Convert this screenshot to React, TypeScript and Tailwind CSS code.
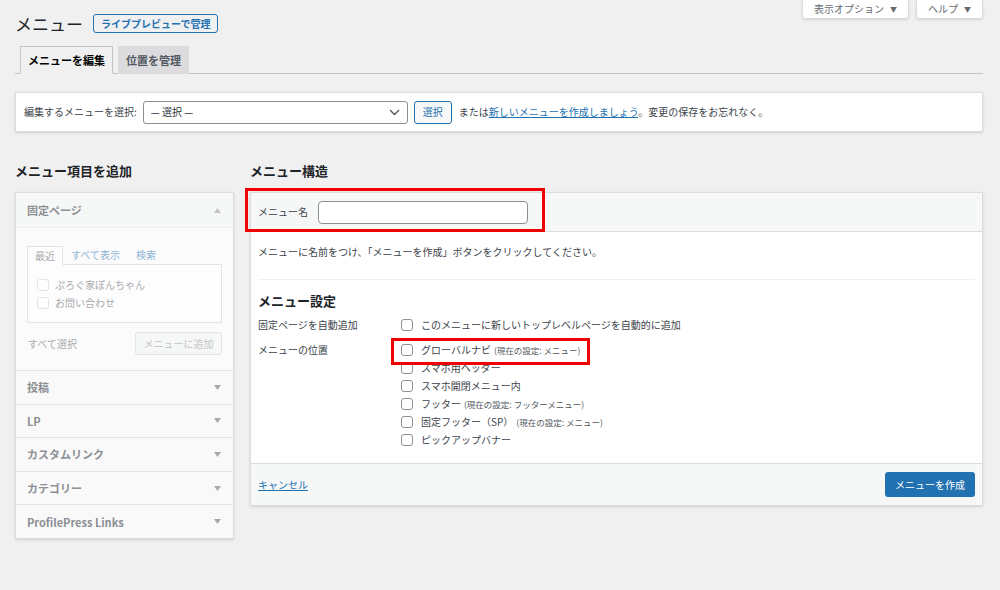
const Check = ({ faded = false }: { faded?: boolean }) => (
  <span
    className={
      "inline-block size-[12px] shrink-0 rounded-[3px] border bg-white " +
      (faded ? "border-[#e2e3e5]" : "border-[#8c8f94]")
    }
  />
);

const Tri = ({ up = false }: { up?: boolean }) => (
  <svg width="7" height="5" viewBox="0 0 7 5" className="shrink-0">
    {up ? <polygon points="0,5 7,5 3.5,0" fill="#c3c4c7" /> : <polygon points="0,0 7,0 3.5,5" fill="#a7aaad" />}
  </svg>
);

const sections = ["投稿", "LP", "カスタムリンク", "カテゴリー", "ProfilePress Links"];

const locations: { name: string; note?: string }[] = [
  { name: "グローバルナビ", note: "(現在の設定: メニュー)" },
  { name: "スマホ用ヘッダー" },
  { name: "スマホ開閉メニュー内" },
  { name: "フッター", note: "(現在の設定: フッターメニュー)" },
  { name: "固定フッター（SP）", note: "(現在の設定: メニュー)" },
  { name: "ピックアップバナー" },
];

export default function App() {
  return (
    <div className="min-h-[590px] bg-[#f0f0f1] font-['Noto_Sans_CJK_JP','Noto_Sans',sans-serif] text-[10px] leading-[14px] text-[#3c434a]">
      {/* title row + screen options */}
      <div className="flex items-start justify-between pl-[15px] pr-[17px]">
        <div className="flex items-center gap-[10px] pt-[14px]">
          <h1 className="text-[17px] leading-[19px] text-[#1d2327]">メニュー</h1>
          <span className="flex h-[19px] items-center rounded-[3px] border border-[#2271b1] px-[7px] text-[10px] font-semibold text-[#2271b1]">
            ライブプレビューで管理
          </span>
        </div>
        <div className="flex gap-[7px]">
          <span className="flex h-[19px] items-center gap-[6px] rounded-b-[3px] border border-t-0 border-[#dcdcde] bg-white px-[11px] text-[#646970] shadow-sm">
            表示オプション <span className="text-[7px]">▼</span>
          </span>
          <span className="flex h-[19px] items-center gap-[6px] rounded-b-[3px] border border-t-0 border-[#dcdcde] bg-white px-[11px] text-[#646970] shadow-sm">
            ヘルプ <span className="text-[7px]">▼</span>
          </span>
        </div>
      </div>

      {/* tabs */}
      <div className="mx-[15px] mr-[17px] mt-[13px] flex gap-[5px] border-b border-[#c3c4c7] pl-[5px]">
        <span className="-mb-px flex h-[28px] items-center border border-[#c3c4c7] border-b-[#f0f0f1] bg-[#f0f0f1] px-[7px] text-[11px] font-bold text-black">
          メニューを編集
        </span>
        <span className="-mb-px flex h-[28px] items-center border border-[#dcdcde] bg-[#dcdcde] px-[7px] text-[11px] font-semibold text-[#50575e]">
          位置を管理
        </span>
      </div>

      {/* select menu bar */}
      <div className="ml-[15px] mr-[17px] mt-[18px] flex h-[40px] items-center border border-[#dcdcde] bg-white px-[8px] shadow-sm">
        <span className="mr-[6px]">編集するメニューを選択:</span>
        <span className="flex h-[23px] w-[265px] items-center justify-between rounded-[3px] border border-[#8c8f94] bg-white pl-[7px] pr-[7px] text-[#2c3338]">
          — 選択 —
          <svg width="11" height="7" viewBox="0 0 11 7">
            <polyline points="1,1 5.5,5.5 10,1" fill="none" stroke="#50575e" strokeWidth="1.4" />
          </svg>
        </span>
        <span className="ml-[6px] flex h-[23px] items-center rounded-[3px] border border-[#2271b1] bg-[#f6f7f7] px-[8px] text-[#2271b1]">
          選択
        </span>
        <span className="ml-[7px]">
          または<span className="text-[#2271b1] underline">新しいメニューを作成しましょう</span>。変更の保存をお忘れなく。
        </span>
      </div>

      {/* columns */}
      <div className="mt-[31px] flex items-start gap-[16px] pl-[15px] pr-[17px]">
        {/* left */}
        <div className="w-[219px] shrink-0">
          <h2 className="mb-[13px] text-[13px] font-bold leading-[16px] text-[#1d2327]">メニュー項目を追加</h2>
          <div className="border border-[#dcdcde] bg-[#fafafa] shadow-sm">
            <div className="flex h-[34px] items-center justify-between bg-[#f6f7f7] pl-[11px] pr-[12px] text-[11px] font-bold text-[#8c8f94]">
              固定ページ
              <Tri up />
            </div>
            <div className="border-t border-[#f0f0f1] bg-[#fbfbfb] px-[11px] pb-[15px] pt-[18px]">
              <div className="flex items-end gap-[8px]">
                <span className="-mb-px flex h-[19px] items-center border border-[#e2e3e5] border-b-[#fdfdfd] bg-[#fdfdfd] px-[7px] text-[#a7aaad]">
                  最近
                </span>
                <span className="flex h-[18px] items-center text-[#8fb4d6]">すべて表示</span>
                <span className="ml-[8px] flex h-[18px] items-center text-[#8fb4d6]">検索</span>
              </div>
              <div className="flex h-[59px] flex-col justify-center gap-[4px] border border-[#e2e3e5] bg-[#fdfdfd] pl-[9px] text-[#a7aaad]">
                <div className="flex items-center gap-[6px]">
                  <Check faded />
                  ぷろぐ家ぽんちゃん
                </div>
                <div className="flex items-center gap-[6px]">
                  <Check faded />
                  お問い合わせ
                </div>
              </div>
              <div className="mt-[9px] flex items-center justify-between">
                <span className="pl-[1px] text-[#a7aaad]">すべて選択</span>
                <span className="flex h-[23px] w-[87px] items-center justify-center rounded-[3px] border border-[#e2e3e5] bg-[#f6f7f7] text-[#c3c4c7]">
                  メニューに追加
                </span>
              </div>
            </div>
            {sections.map((s) => (
              <div
                key={s}
                className="flex h-[33.6px] items-center justify-between border-t border-[#e2e3e5] bg-[#f9f9f9] pl-[11px] pr-[12px] text-[11px] font-bold text-[#8c8f94]"
              >
                {s}
                <Tri />
              </div>
            ))}
          </div>
        </div>

        {/* right */}
        <div className="min-w-0 flex-1">
          <h2 className="mb-[13px] text-[13px] font-bold leading-[16px] text-[#1d2327]">メニュー構造</h2>
          <div className="border border-[#dcdcde] bg-white shadow-sm">
            <div className="relative flex h-[39px] items-center gap-[10px] border-b border-[#dcdcde] bg-[#f6f7f7] px-[7px]">
              <span>メニュー名</span>
              <span className="h-[23px] w-[210px] rounded-[4px] border border-[#8c8f94] bg-white" />
              <div className="absolute -left-[6px] -top-[5px] h-[44px] w-[300px] border-[3px] border-[#f00000]" />
            </div>
            <div className="px-[7px] pb-[14px] pt-[13px]">
              <p>メニューに名前をつけ、「メニューを作成」ボタンをクリックしてください。</p>
              <div className="mt-[20px] border-t border-[#f0f0f1]" />
              <h3 className="mt-[13px] text-[13px] font-bold leading-[16px] text-[#1d2327]">メニュー設定</h3>
              <div className="mt-[7px] flex leading-[18px]">
                <span className="w-[143px] shrink-0">固定ページを自動追加</span>
                <div className="flex items-center gap-[8px]">
                  <Check />
                  このメニューに新しいトップレベルページを自動的に追加
                </div>
              </div>
              <div className="mt-[7px] flex leading-[18px]">
                <span className="w-[143px] shrink-0">メニューの位置</span>
                <div className="flex flex-col">
                  {locations.map((l, i) => (
                    <div key={l.name} className="relative flex items-center gap-[8px]">
                      <Check />
                      <span>
                        {l.name}
                        {l.note && <span className="ml-[3px] text-[8.5px] text-[#50575e]">{l.note}</span>}
                      </span>
                      {i === 0 && (
                        <div className="absolute -left-[10px] -top-[3px] z-10 h-[27px] w-[199px] border-[3px] border-[#f00000]" />
                      )}
                    </div>
                  ))}
                </div>
              </div>
            </div>
            <div className="flex h-[42px] items-center justify-between border-t border-[#dcdcde] bg-[#f6f7f7] px-[7px]">
              <span className="text-[#2271b1] underline">キャンセル</span>
              <span className="flex h-[25px] w-[90px] items-center justify-center rounded-[3px] bg-[#2271b1] text-white">
                メニューを作成
              </span>
            </div>
          </div>
        </div>
      </div>
    </div>
  );
}
